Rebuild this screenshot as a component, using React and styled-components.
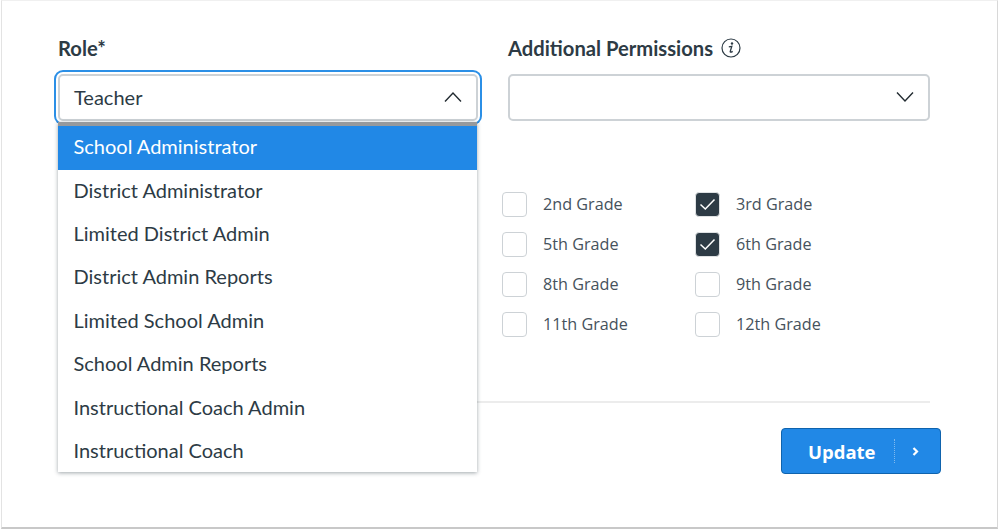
import React from 'react';
import styled, { createGlobalStyle } from 'styled-components';

const GlobalStyle = createGlobalStyle`
  html, body {
    margin: 0;
    padding: 0;
    background: #fff;
  }
  body {
    font-family: "Lato", "Liberation Sans", sans-serif;
    color: #2d3b45;
  }
`;

const Card = styled.div`
  box-sizing: border-box;
  width: 997px;
  height: 529px;
  margin-left: 1px;
  padding: 35px 67px 0 56px;
  background: #fff;
  border: 1px solid #e3e3e3;
  border-top-color: #f0f0f0;
  border-right-color: #d8d8d8;
  border-bottom: 2px solid #c8c8c8;
`;

const Fields = styled.div`
  display: grid;
  grid-template-columns: 420px 422px;
  column-gap: 30px;
`;

const Field = styled.div`
  position: relative;
`;

const Label = styled.div`
  display: flex;
  align-items: center;
  gap: 8px;
  height: 24px;
  margin-bottom: 14px;
  font-size: 20.2px;
  font-weight: 700;
  line-height: 24px;
`;

const SelectBox = styled.div`
  box-sizing: border-box;
  display: flex;
  align-items: center;
  justify-content: space-between;
  height: 47px;
  padding: 0 14px 2px 14px;
  background: #fff;
  border: 2px solid #cdd2d6;
  border-radius: 5px;
  font-size: 20px;
  box-shadow: ${(p) => (p.$focused ? '0 0 0 2px #fff, 0 0 0 4px #2b8fe6' : 'none')};
`;

const Menu = styled.ul`
  position: absolute;
  z-index: 2;
  top: 86px;
  left: 0;
  box-sizing: border-box;
  width: 419px;
  height: 350px;
  margin: 0;
  padding: 0;
  list-style: none;
  background: #fff;
  border-top: 4px solid #96999c;
  box-shadow: 0 1px 4px rgba(45, 59, 69, 0.45);
`;

const Option = styled.li`
  box-sizing: border-box;
  display: flex;
  align-items: center;
  height: ${(p) => (p.$active ? '44px' : '43.4px')};
  padding: 0 0 4px 15.5px;
  font-size: 20px;
  color: ${(p) => (p.$active ? '#fff' : '#2d3b45')};
  background: ${(p) => (p.$active ? '#2188e6' : 'transparent')};
`;

const Grades = styled.div`
  display: grid;
  grid-template-columns: 193px 193px;
  grid-auto-rows: 40px;
  margin: 63px 0 0 444px;
  font-family: "Open Sans", "Liberation Sans", sans-serif;
`;

const Grade = styled.div`
  display: flex;
  align-items: center;
  gap: 16px;
  font-size: 16.2px;
  color: #46525c;
`;

const Box = styled.span`
  box-sizing: border-box;
  display: flex;
  align-items: center;
  justify-content: center;
  width: 25px;
  height: 25px;
  background: ${(p) => (p.$checked ? '#2d3b45' : '#fff')};
  border: ${(p) => (p.$checked ? '1px solid #dfe2e4' : '1px solid #cdd2d6')};
  border-radius: 4px;
`;

const Divider = styled.div`
  height: 2px;
  margin-top: 57px;
  background: #ececec;
`;

const Actions = styled.div`
  display: flex;
  justify-content: flex-end;
  margin: 25px -11px 0 0;
`;

const UpdateButton = styled.button`
  box-sizing: border-box;
  display: flex;
  align-items: center;
  width: 160px;
  height: 46px;
  padding: 0;
  background: #2188e6;
  border: 1px solid #0f63ad;
  border-radius: 4px;
  color: #fff;
  font-family: "Open Sans", "Liberation Sans", sans-serif;
  font-size: 18.5px;
  font-weight: 700;
`;

const ButtonText = styled.span`
  flex: 1;
  padding-left: 26px;
  text-align: left;
`;

const ButtonIcon = styled.span`
  box-sizing: border-box;
  display: flex;
  align-items: center;
  justify-content: center;
  width: 46px;
  height: 24px;
  padding-right: 5px;
  border-left: 1px dotted #7fb9ee;
`;

const Chevron = ({ up }) => (
  <svg width="18" height="12" viewBox="0 0 18 12" fill="none" stroke="#222b31" strokeWidth="1.4">
    <path d={up ? 'M1 10.5 L9 2 L17 10.5' : 'M1 1.5 L9 10 L17 1.5'} />
  </svg>
);

const InfoIcon = () => (
  <svg width="20" height="20" viewBox="0 0 20 20" fill="none">
    <circle cx="10" cy="10" r="9" stroke="#2d3b45" strokeWidth="1.2" />
    <circle cx="11" cy="5.5" r="1.2" fill="#2d3b45" />
    <path d="M7.8 8.8 L10.8 8.3 L9.2 13.6 Q9.1 14.9 11.7 13.4" stroke="#2d3b45" strokeWidth="1.3" />
  </svg>
);

const Check = () => (
  <svg width="17" height="13" viewBox="0 0 17 13" fill="none" stroke="#fff" strokeWidth="1.5">
    <path d="M1.5 6.5 L6.3 11 L15.5 1.5" />
  </svg>
);

const SmallArrow = () => (
  <svg width="7" height="9" viewBox="0 0 7 9" fill="none" stroke="#fff" strokeWidth="2.2">
    <path d="M1.5 1 L5 4.5 L1.5 8" />
  </svg>
);

const roles = [
  'School Administrator',
  'District Administrator',
  'Limited District Admin',
  'District Admin Reports',
  'Limited School Admin',
  'School Admin Reports',
  'Instructional Coach Admin',
  'Instructional Coach',
];

const grades = [
  { name: '2nd Grade' },
  { name: '3rd Grade', checked: true },
  { name: '5th Grade' },
  { name: '6th Grade', checked: true },
  { name: '8th Grade' },
  { name: '9th Grade' },
  { name: '11th Grade' },
  { name: '12th Grade' },
];

export default function App() {
  return (
    <>
      <GlobalStyle />
      <Card>
        <Fields>
          <Field>
            <Label>Role*</Label>
            <SelectBox $focused>
              Teacher
              <Chevron up />
            </SelectBox>
            <Menu>
              {roles.map((role, i) => (
                <Option key={role} $active={i === 0}>{role}</Option>
              ))}
            </Menu>
          </Field>
          <Field>
            <Label>
              Additional Permissions
              <InfoIcon />
            </Label>
            <SelectBox>
              <span />
              <Chevron />
            </SelectBox>
          </Field>
        </Fields>
        <Grades>
          {grades.map((g) => (
            <Grade key={g.name}>
              <Box $checked={g.checked}>{g.checked && <Check />}</Box>
              {g.name}
            </Grade>
          ))}
        </Grades>
        <Divider />
        <Actions>
          <UpdateButton>
            <ButtonText>Update</ButtonText>
            <ButtonIcon><SmallArrow /></ButtonIcon>
          </UpdateButton>
        </Actions>
      </Card>
    </>
  );
}
